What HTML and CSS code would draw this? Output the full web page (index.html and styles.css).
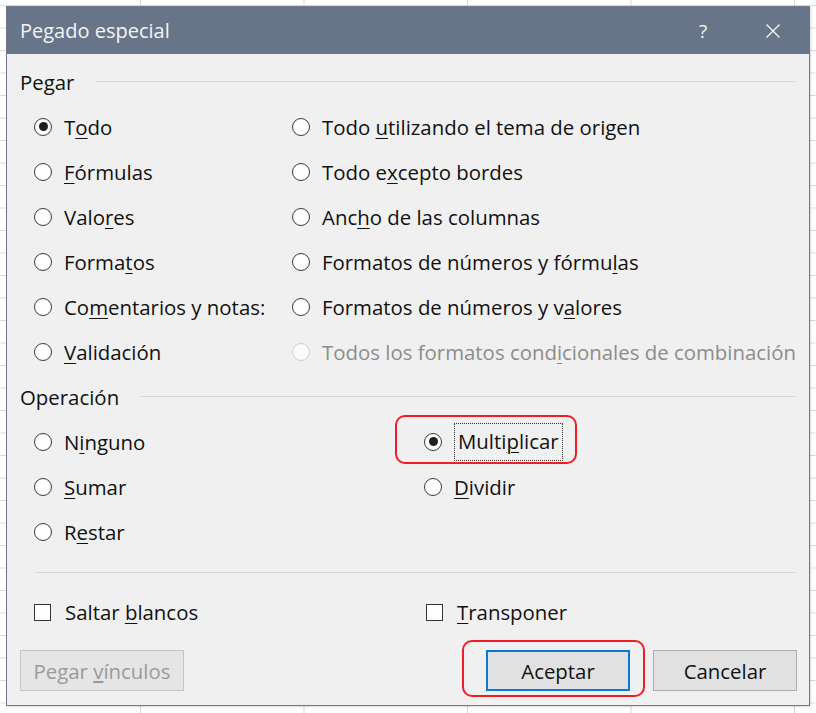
FILE: index.html
```html
<!DOCTYPE html>
<html lang="es">
<head>
<meta charset="utf-8">
<title>Pegado especial</title>
<link rel="stylesheet" href="styles.css">
</head>
<body>
<div class="dialog">
  <div class="titlebar">
    <span class="title">Pegado especial</span>
    <span class="help">?</span>
    <span class="close"><svg width="16" height="16" viewBox="0 0 16 16"><path d="M1.5 1.5 L14.5 14.5 M14.5 1.5 L1.5 14.5" stroke="#f2f4f7" stroke-width="1.4" fill="none"/></svg></span>
  </div>
  <div class="body">
    <div class="group-head"><span>Pegar</span><span class="rule"></span></div>
    <div class="paste-grid">
      <label class="opt"><span class="radio checked"></span><span>T<u>o</u>do</span></label>
      <label class="opt"><span class="radio"></span><span>Todo <u>u</u>tilizando el tema de origen</span></label>
      <label class="opt"><span class="radio"></span><span><u>F</u>órmulas</span></label>
      <label class="opt"><span class="radio"></span><span>Todo e<u>x</u>cepto bordes</span></label>
      <label class="opt"><span class="radio"></span><span>Valo<u>r</u>es</span></label>
      <label class="opt"><span class="radio"></span><span>Anc<u>h</u>o de las columnas</span></label>
      <label class="opt"><span class="radio"></span><span>Forma<u>t</u>os</span></label>
      <label class="opt"><span class="radio"></span><span>Formatos de números y fórmu<u>l</u>as</span></label>
      <label class="opt"><span class="radio"></span><span>Co<u>m</u>entarios y notas:</span></label>
      <label class="opt"><span class="radio"></span><span>Formatos de números y v<u>a</u>lores</span></label>
      <label class="opt"><span class="radio"></span><span><u>V</u>alidación</span></label>
      <label class="opt disabled"><span class="radio"></span><span>Todos los formatos cond<u>i</u>cionales de combinación</span></label>
    </div>
    <div class="group-head"><span>Operación</span><span class="rule"></span></div>
    <div class="op-grid">
      <label class="opt"><span class="radio"></span><span>N<u>i</u>nguno</span></label>
      <label class="opt highlighted"><span class="radio checked"></span><span class="focus">Multi<u>p</u>licar</span><span class="redbox redbox-mult"></span></label>
      <label class="opt"><span class="radio"></span><span><u>S</u>umar</span></label>
      <label class="opt"><span class="radio"></span><span><u>D</u>ividir</span></label>
      <label class="opt"><span class="radio"></span><span>R<u>e</u>star</span></label>
      <span></span>
    </div>
    <div class="separator"></div>
    <div class="check-row">
      <label class="opt"><span class="checkbox"></span><span>Saltar <u>b</u>lancos</span></label>
      <label class="opt"><span class="checkbox"></span><span><u>T</u>ransponer</span></label>
    </div>
    <div class="button-row">
      <button class="btn disabled">Pegar <u>v</u>ínculos</button>
      <span class="spacer"></span>
      <span class="btn-wrap"><button class="btn default">Aceptar</button><span class="redbox redbox-ok"></span></span>
      <button class="btn">Cancelar</button>
    </div>
  </div>
</div>
</body>
</html>
```

FILE: styles.css
```css
html, body {
  margin: 0;
  padding: 0;
}
body {
  width: 816px;
  height: 713px;
  overflow: hidden;
  background-color: #ffffff;
  background-image:
    linear-gradient(to right, #d6d6d6 1px, transparent 1px),
    linear-gradient(to bottom, #dcdcdc 1px, transparent 1px);
  background-size: 163.5px 100%, 100% 22.5px;
  background-position: 140px 0, 0 5px;
  font-family: "Open Sans", "Noto Sans", sans-serif;
  color: #111;
}
.dialog {
  margin: 6px 0 0 6px;
  width: 804px;
  height: 700px;
  box-sizing: border-box;
  border: 1px solid #6e7888;
  background: #f0f0f0;
  display: flex;
  flex-direction: column;
  box-shadow: 1px 1px 2px rgba(0,0,0,0.15);
}
.titlebar {
  height: 47px;
  flex: none;
  background: #687588;
  color: #f2f4f7;
  display: flex;
  align-items: center;
  padding: 0 21px 0 13px;
  font-size: 20px;
}
.title {
  flex: 1;
}
.help {
  width: 30px;
  text-align: center;
  font-size: 19px;
}
.close {
  width: 30px;
  margin-left: 40px;
  display: flex;
  justify-content: center;
}
.body {
  padding: 5px 14px 0 13px;
  display: flex;
  flex-direction: column;
  font-size: 20.4px;
}
.group-head {
  height: 45px;
  display: flex;
  align-items: center;
}
.group-head .rule {
  flex: 1;
  height: 0;
  border-top: 1px solid #d9d9d9;
  margin-left: 21px;
  margin-top: 0;
}
.paste-grid {
  display: grid;
  grid-template-columns: 258px auto;
  grid-auto-rows: 45px;
  margin-left: 14px;
}
.op-grid {
  display: grid;
  grid-template-columns: 390px auto;
  grid-auto-rows: 45px;
  margin-left: 14px;
}
.opt {
  display: flex;
  align-items: center;
  gap: 12px;
  white-space: nowrap;
}
.opt u {
  text-decoration-thickness: 1px;
  text-underline-offset: 3px;
}
.radio {
  width: 18px;
  height: 18px;
  box-sizing: border-box;
  border: 1.5px solid #3a3a3a;
  border-radius: 50%;
  background: #fff;
  flex: none;
  display: flex;
  align-items: center;
  justify-content: center;
}
.radio.checked::after {
  content: "";
  width: 9px;
  height: 9px;
  border-radius: 50%;
  background: #1e1e1e;
}
.disabled {
  color: #8c8c8c;
}
.opt.disabled .radio {
  border-color: #cfcfcf;
  background: #fafafa;
}
.highlighted {
  position: relative;
}
.focus {
  border: 1px dotted #333;
  padding: 0 3px;
  height: 36px;
  line-height: 35px;
  margin-left: 0;
}
.redbox {
  position: absolute;
  border: 2px solid #ee1c25;
  border-radius: 10px;
  box-sizing: border-box;
  pointer-events: none;
}
.redbox-mult {
  left: -29px;
  top: -4px;
  width: 182px;
  height: 49px;
}
.separator {
  margin: 18px 0 0 15px;
  border-top: 1px solid #d9d9d9;
}
.check-row {
  margin-top: 19px;
  height: 40px;
  margin-left: 14px;
  display: grid;
  grid-template-columns: 392px auto;
}
.check-row .opt {
  gap: 14px;
}
.checkbox {
  width: 17px;
  height: 17px;
  box-sizing: border-box;
  border: 1.5px solid #333;
  background: #fff;
  flex: none;
}
.button-row {
  margin-top: 18px;
  margin-right: -2px;
  display: flex;
  align-items: center;
}
.spacer {
  flex: 1;
}
.btn {
  font-family: "Open Sans", "Noto Sans", sans-serif;
  font-size: 20.4px;
  height: 41px;
  width: 144px;
  box-sizing: border-box;
  background: #e1e1e1;
  border: 1px solid #adadad;
  color: #111;
  padding: 0;
  margin: 0;
  line-height: 1;
  padding-top: 1px;
}
.btn.disabled {
  width: 164px;
  color: #9a9a9a;
  border-color: #c4c4c4;
  background: #e5e5e5;
}
.btn.default {
  border: 2px solid #0a78d7;
}
.btn-wrap {
  position: relative;
  display: flex;
  margin-right: 23px;
}
.redbox-ok {
  left: -24px;
  top: -10px;
  width: 183px;
  height: 57px;
}
```
